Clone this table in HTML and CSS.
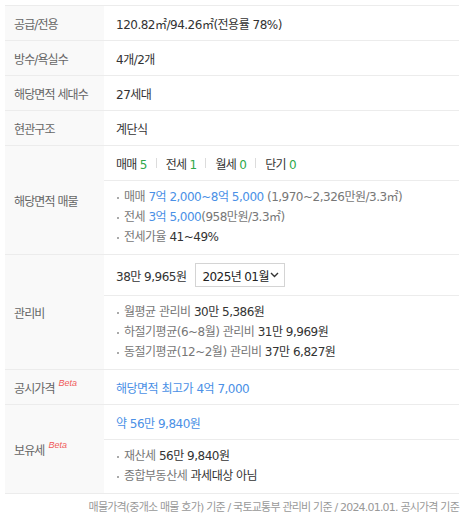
FILE: index.html
```html
<!DOCTYPE html>
<html lang="ko">
<head>
<meta charset="utf-8">
<link rel="stylesheet" href="styles.css">
</head>
<body>
<div class="info">
  <div class="row">
    <div class="label"><span>공급/전용</span></div>
    <div class="value"><div class="cell">120.82㎡/94.26㎡(전용률 78%)</div></div>
  </div>
  <div class="row">
    <div class="label"><span>방수/욕실수</span></div>
    <div class="value"><div class="cell">4개/2개</div></div>
  </div>
  <div class="row">
    <div class="label"><span>해당면적 세대수</span></div>
    <div class="value"><div class="cell">27세대</div></div>
  </div>
  <div class="row">
    <div class="label"><span>현관구조</span></div>
    <div class="value"><div class="cell">계단식</div></div>
  </div>
  <div class="row">
    <div class="label"><span>해당면적 매물</span></div>
    <div class="value">
      <div class="cell counts">
        <span class="cnt">매매 <em>5</em></span><span class="sep"></span>
        <span class="cnt">전세 <em>1</em></span><span class="sep"></span>
        <span class="cnt">월세 <em>0</em></span><span class="sep"></span>
        <span class="cnt">단기 <em>0</em></span>
      </div>
      <ul class="bullets">
        <li>매매 <span class="blue">7억 2,000~8억 5,000</span> (1,970~2,326만원/3.3㎡)</li>
        <li>전세 <span class="blue">3억 5,000</span>(958만원/3.3㎡)</li>
        <li>전세가율 <span class="dark">41~49%</span></li>
      </ul>
    </div>
  </div>
  <div class="row">
    <div class="label"><span>관리비</span></div>
    <div class="value">
      <div class="cell fee">
        <span class="dark">38만 9,965원</span>
        <span class="select">2025년 01월<svg width="9" height="6" viewBox="0 0 9 6"><path d="M1 1l3.5 3.5L8 1" fill="none" stroke="#333" stroke-width="1.4"/></svg></span>
      </div>
      <ul class="bullets">
        <li>월평균 관리비 <span class="dark">30만 5,386원</span></li>
        <li>하절기평균(6~8월) 관리비 <span class="dark">31만 9,969원</span></li>
        <li>동절기평균(12~2월) 관리비 <span class="dark">37만 6,827원</span></li>
      </ul>
    </div>
  </div>
  <div class="row">
    <div class="label"><span>공시가격<sup class="beta">Beta</sup></span></div>
    <div class="value"><div class="cell blue">해당면적 최고가 4억 7,000</div></div>
  </div>
  <div class="row">
    <div class="label"><span>보유세<sup class="beta">Beta</sup></span></div>
    <div class="value">
      <div class="cell blue">약 56만 9,840원</div>
      <ul class="bullets">
        <li>재산세 <span class="dark">56만 9,840원</span></li>
        <li>종합부동산세 <span class="dark">과세대상 아님</span></li>
      </ul>
    </div>
  </div>
</div>
<p class="note">매물가격(중개소 매물 호가) 기준 / 국토교통부 관리비 기준 / 2024.01.01. 공시가격 기준</p>
</body>
</html>
```

FILE: styles.css
```css
* { box-sizing: border-box; }
body {
  margin: 0;
  padding: 5px 7px 0 5px;
  background: #fff;
  font-family: "DejaVu Sans", "Noto Sans CJK KR", sans-serif;
  font-size: 12px;
  letter-spacing: -0.5px;
  color: #666;
}
.info {
  border-top: 1px solid #ececec;
}
.row {
  display: flex;
  border-bottom: 1px solid #ececec;
}
.label {
  width: 99px;
  flex: none;
  background: #f9f9f9;
  padding-left: 9px;
  display: flex;
  align-items: center;
  color: #666;
  letter-spacing: -0.9px;
}
.value {
  flex: 1;
  display: flex;
  flex-direction: column;
}
.cell {
  height: 34px;
  display: flex;
  align-items: center;
  padding-left: 12px;
  color: #333;
}
.value > * + * {
  border-top: 1px solid #ececec;
}
.counts { color: #333; letter-spacing: -0.7px; }
.cnt em {
  font-style: normal;
  color: #2ea84a;
}
.sep {
  display: inline-block;
  width: 1px;
  height: 10px;
  background: #dcdcdc;
  margin: 0 9px;
}
.fee { height: 40px; }
.select {
  margin-left: 8px;
  height: 24px;
  width: 90px;
  border: 1px solid #d4d4d4;
  display: inline-flex;
  align-items: center;
  padding-left: 7px;
  color: #222;
  letter-spacing: -0.6px;
}
.select svg { margin-left: 1px; flex: none; }
.bullets {
  list-style: none;
  margin: 0;
  padding: 6px 0 7px 12px;
}
.bullets li {
  position: relative;
  line-height: 20px;
  padding-left: 8px;
  color: #777;
}
.bullets li::before {
  content: "";
  position: absolute;
  left: 1px;
  top: 10px;
  width: 2px;
  height: 2px;
  background: #aaa;
}
.blue { color: #4a90e6; }
.dark { color: #333; }
.beta {
  font-family: "Liberation Sans", sans-serif;
  font-style: italic;
  font-size: 9px;
  color: #f05a5a;
  margin-left: 4px;
  vertical-align: 7px;
  line-height: 0;
  letter-spacing: 0;
}
.note {
  margin: 0;
  padding-top: 6px;
  text-align: right;
  font-size: 11px;
  line-height: 16px;
  color: #999;
  letter-spacing: -0.8px;
}
```
